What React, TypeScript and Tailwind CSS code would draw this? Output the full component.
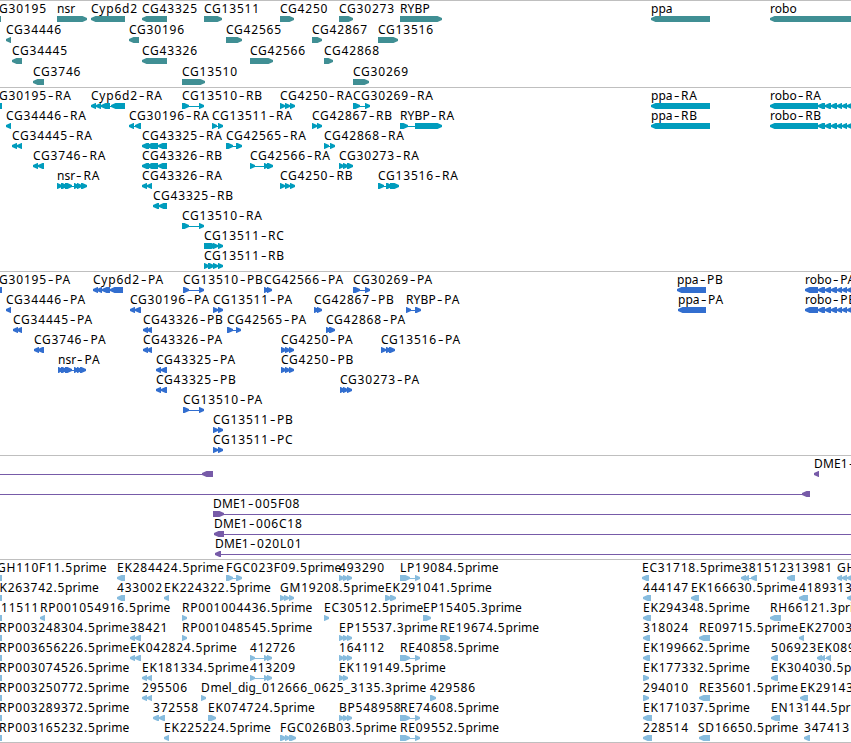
type Dir = "L" | "R"
type Exon = [number, number]

// label, start x, strand, exon blocks (joined by a thin intron line)
type Feature = [string, number, Dir, Exon[]]

interface Track {
  name: string
  color: string
  className: string
  rowClassName: string
  rows: Feature[][]
}

const GLYPH_HEIGHT = 6
const HEAD = 5

const cyp: Exon[] = [[91, 96], [96, 101], [101, 110], [111, 125]]
const robo: Exon[] = [[818, 825], [825, 831], [831, 837], [837, 842], [842, 847], [847, 853]]
const cg4250: Exon[] = [[280, 285], [285, 290], [290, 295]]
const cg43326: Exon[] = [[142, 149], [147, 158], [158, 167]]
const cg4250p: Exon[] = [[281, 286], [285, 290], [289, 294]]
const cg30273: Exon[] = [[339, 344], [343, 348], [347, 352]]
const rybpEst: Exon[] = [[400, 410], [415, 420]]
const cg42566: Exon[] = [[250, 255], [264, 268], [267, 272]]
const edge: Exon[] = [[-5, 2]]

const tracks: Track[] = [
  {
    name: "genes",
    color: "#408f94",
    className: "h-[87px]",
    rowClassName: "h-[21px]",
    rows: [
      [
        ["CG30195", -9, "L", [[-10, 1]]],
        ["nsr", 57, "R", [[57, 87]]],
        ["Cyp6d2", 91, "L", [[91, 125]]],
        ["CG43325", 142, "L", [[142, 167]]],
        ["CG13511", 204, "R", [[204, 222]]],
        ["CG4250", 280, "R", [[280, 294]]],
        ["CG30273", 339, "R", [[339, 353]]],
        ["RYBP", 400, "R", [[400, 442]]],
        ["ppa", 651, "L", [[651, 710]]],
        ["robo", 770, "L", [[770, 860]]],
      ],
      [
        ["CG34446", 6, "L", [[6, 11]]],
        ["CG30196", 129, "L", [[129, 139]]],
        ["CG42565", 226, "R", [[226, 242]]],
        ["CG42867", 312, "R", [[312, 322]]],
        ["CG13516", 378, "R", [[378, 398]]],
      ],
      [
        ["CG34445", 12, "L", [[12, 22]]],
        ["CG43326", 142, "L", [[142, 167]]],
        ["CG42566", 250, "R", [[250, 273]]],
        ["CG42868", 324, "R", [[324, 333]]],
      ],
      [
        ["CG3746", 33, "L", [[33, 44]]],
        ["CG13510", 182, "R", [[182, 205]]],
        ["CG30269", 353, "R", [[353, 369]]],
      ],
    ],
  },
  {
    name: "transcripts",
    color: "#009cbd",
    className: "h-[184px]",
    rowClassName: "h-5",
    rows: [
      [
        ["CG30195-RA", -9, "L", edge],
        ["Cyp6d2-RA", 91, "L", cyp],
        ["CG13510-RB", 182, "R", [[182, 189], [199, 204]]],
        ["CG4250-RA", 280, "R", cg4250],
        ["CG30269-RA", 353, "R", [[353, 360], [365, 370]]],
        ["ppa-RA", 651, "L", [[651, 710]]],
        ["robo-RA", 770, "L", [[770, 818], ...robo]],
      ],
      [
        ["CG34446-RA", 6, "L", [[6, 11]]],
        ["CG30196-RA", 129, "L", [[129, 134], [135, 141]]],
        ["CG13511-RA", 212, "R", [[212, 217], [218, 223]]],
        ["CG42867-RB", 312, "R", [[312, 317], [317, 322]]],
        ["RYBP-RA", 400, "R", [[400, 408], [415, 442]]],
        ["ppa-RB", 651, "L", [[651, 710]]],
        ["robo-RB", 770, "L", [[770, 818], ...robo]],
      ],
      [
        ["CG34445-RA", 12, "L", [[12, 17], [17, 22]]],
        ["CG43325-RA", 142, "L", cg43326],
        ["CG42565-RA", 226, "R", [[226, 233], [236, 242]]],
        ["CG42868-RA", 324, "R", [[324, 329], [330, 335]]],
      ],
      [
        ["CG3746-RA", 33, "L", [[33, 38], [38, 44]]],
        ["CG43326-RB", 142, "L", cg43326],
        ["CG42566-RA", 250, "R", [[250, 255], [264, 269], [267, 273]]],
        ["CG30273-RA", 339, "R", [[339, 344], [343, 348], [347, 353]]],
      ],
      [
        ["nsr-RA", 57, "R", [[57, 62], [61, 67], [65, 72], [74, 79], [77, 82], [81, 87]]],
        ["CG43326-RA", 142, "L", [[142, 147], [147, 152]]],
        ["CG4250-RB", 280, "R", cg4250],
        ["CG13516-RA", 378, "R", [[378, 384], [386, 392], [390, 399]]],
      ],
      [["CG43325-RB", 153, "L", [[153, 159], [159, 167]]]],
      [["CG13510-RA", 182, "R", [[182, 189], [199, 204]]]],
      [["CG13511-RC", 204, "R", [[204, 216], [213, 218], [218, 223]]]],
      [["CG13511-RB", 204, "R", [[204, 209], [208, 214], [213, 218], [218, 223]]]],
    ],
  },
  {
    name: "proteins",
    color: "#326ecf",
    className: "h-[184px]",
    rowClassName: "h-5",
    rows: [
      [
        ["CG30195-PA", -9, "L", edge],
        ["Cyp6d2-PA", 93, "L", [[93, 98], [97, 102], [102, 110], [110, 123]]],
        ["CG13510-PB", 183, "R", [[183, 189], [199, 204]]],
        ["CG42566-PA", 264, "R", [[264, 269], [267, 272]]],
        ["CG30269-PA", 353, "R", [[353, 360], [365, 370]]],
        ["ppa-PB", 677, "L", [[677, 706]]],
        ["robo-PA", 805, "L", [[805, 818], ...robo]],
      ],
      [
        ["CG34446-PA", 6, "L", [[6, 11]]],
        ["CG30196-PA", 130, "L", [[130, 135], [135, 141]]],
        ["CG13511-PA", 213, "R", [[213, 218], [218, 223]]],
        ["CG42867-PB", 314, "R", [[314, 319], [317, 322]]],
        ["RYBP-PA", 406, "R", [[406, 411], [415, 421]]],
        ["ppa-PA", 678, "L", [[678, 706]]],
        ["robo-PB", 805, "L", [[805, 818], ...robo]],
      ],
      [
        ["CG34445-PA", 13, "L", [[13, 18], [17, 22]]],
        ["CG43326-PB", 143, "L", [[143, 148], [147, 152]]],
        ["CG42565-PA", 227, "R", [[227, 233], [236, 241]]],
        ["CG42868-PA", 326, "R", [[326, 331], [329, 335]]],
      ],
      [
        ["CG3746-PA", 34, "L", [[34, 39], [38, 44]]],
        ["CG43326-PA", 143, "L", [[143, 148], [147, 152]]],
        ["CG4250-PA", 281, "R", cg4250p],
        ["CG13516-PA", 381, "R", [[381, 386], [386, 391], [389, 395]]],
      ],
      [
        ["nsr-PA", 58, "R", [[58, 63], [61, 67], [65, 72], [74, 79], [77, 82], [80, 86]]],
        ["CG43325-PA", 156, "L", [[156, 161], [161, 167]]],
        ["CG4250-PB", 281, "R", cg4250p],
      ],
      [
        ["CG43325-PB", 156, "L", [[156, 161], [161, 167]]],
        ["CG30273-PA", 340, "R", [[340, 345], [343, 348], [347, 352]]],
      ],
      [["CG13510-PA", 183, "R", [[183, 189], [199, 204]]]],
      [["CG13511-PB", 213, "R", [[213, 218], [218, 223]]]],
      [["CG13511-PC", 213, "R", [[213, 218], [218, 223]]]],
    ],
  },
  {
    name: "bacs",
    color: "#775ba8",
    className: "h-[104px]",
    rowClassName: "h-5",
    rows: [
      [
        ["", 0, "L", [[-20, -10], [202, 213]]],
        ["DME1-", 814, "L", [[814, 819]]],
      ],
      [["", 0, "L", [[-20, -10], [802, 810]]]],
      [["DME1-005F08", 213, "R", [[213, 224], [870, 880]]]],
      [["DME1-006C18", 214, "L", [[214, 224], [870, 880]]]],
      [["DME1-020L01", 215, "L", [[215, 221], [870, 880]]]],
    ],
  },
  {
    name: "ests",
    color: "#87bcde",
    className: "h-[184px] border-b",
    rowClassName: "h-5",
    rows: [
      [
        ["GH110F11.5prime", -3, "L", edge],
        ["EK284424.5prime", 117, "L", [[117, 125]]],
        ["FGC023F09.5prime", 226, "R", [[226, 233], [236, 242]]],
        ["493290", 339, "R", cg30273],
        ["LP19084.5prime", 400, "R", rybpEst],
        ["EC31718.5prime", 642, "L", [[642, 649]]],
        ["381512", 741, "L", [[741, 746], [745, 749], [751, 757]]],
        ["313981", 787, "L", [[787, 795]]],
        ["GH", 837, "L", [[837, 842], [842, 847], [847, 853]]],
      ],
      [
        ["EK263742.5prime", -8, "L", edge],
        ["433002", 117, "L", [[117, 125]]],
        ["EK224322.5prime", 164, "L", [[164, 169]]],
        ["GM19208.5prime", 280, "R", [[280, 285], [284, 289], [289, 294]]],
        ["EK291041.5prime", 385, "R", [[385, 391], [390, 396]]],
        ["444147", 643, "L", [[643, 651]]],
        ["EK166630.5prime", 691, "L", [[691, 699]]],
        ["418931", 799, "L", [[799, 808]]],
        ["3", 845, "L", [[847, 853]]],
      ],
      [
        ["11511", 1, "L", edge],
        ["RP001054916.5prime", 40, "L", [[40, 45]]],
        ["RP001004436.5prime", 182, "R", [[182, 187]]],
        ["EC30512.5prime", 324, "R", [[324, 329]]],
        ["EP15405.3prime", 423, "R", [[423, 431]]],
        ["EK294348.5prime", 643, "L", [[643, 651]]],
        ["RH66121.3prime", 770, "L", [[770, 781]]],
      ],
      [
        ["RP003248304.5prime", -1, "L", edge],
        ["38421", 130, "L", [[130, 135], [135, 141]]],
        ["RP001048545.5prime", 182, "R", [[182, 187]]],
        ["EP15537.3prime", 339, "R", cg30273],
        ["RE19674.5prime", 440, "R", [[440, 450]]],
        ["318024", 643, "L", [[643, 650]]],
        ["RE09715.5prime", 699, "L", [[699, 710]]],
        ["EK27003", 799, "L", [[799, 804]]],
      ],
      [
        ["RP003656226.5prime", -1, "L", edge],
        ["EK042824.5prime", 130, "L", [[130, 135], [135, 141]]],
        ["412726", 250, "R", cg42566],
        ["164112", 339, "R", cg30273],
        ["RE40858.5prime", 400, "R", rybpEst],
        ["EK199662.5prime", 643, "L", [[643, 650]]],
        ["506923", 771, "L", [[771, 778]]],
        ["EK089", 817, "L", [[817, 822], [821, 825], [826, 831]]],
      ],
      [
        ["RP003074526.5prime", -1, "L", edge],
        ["EK181334.5prime", 142, "L", [[142, 147], [147, 152]]],
        ["413209", 250, "R", cg42566],
        ["EK119149.5prime", 339, "R", [[339, 344], [343, 348]]],
        ["EK177332.5prime", 643, "R", [[643, 649]]],
        ["EK304030.5prime", 771, "L", [[771, 778]]],
      ],
      [
        ["RP003250772.5prime", -1, "L", edge],
        ["295506", 142, "L", [[142, 147], [147, 152]]],
        ["Dmel_dig_012666_0625_3135.3prime", 201, "R", [[201, 206]]],
        ["429586", 430, "R", [[430, 436]]],
        ["294010", 643, "R", [[643, 649]]],
        ["RE35601.5prime", 699, "L", [[699, 710]]],
        ["EK29143", 800, "L", [[800, 808]]],
      ],
      [
        ["RP003289372.5prime", -1, "L", edge],
        ["372558", 153, "L", [[153, 159], [159, 165]]],
        ["EK074724.5prime", 208, "R", [[208, 216]]],
        ["BP548958", 339, "R", cg30273],
        ["RE74608.5prime", 400, "R", rybpEst],
        ["EK171037.5prime", 643, "L", [[643, 652]]],
        ["EN13144.5prime", 771, "L", [[771, 780]]],
      ],
      [
        ["RP003165232.5prime", -1, "L", edge],
        ["EK225224.5prime", 164, "L", [[164, 169]]],
        ["FGC026B03.5prime", 280, "R", [[280, 286], [285, 290], [289, 296]]],
        ["RE09552.5prime", 400, "R", rybpEst],
        ["228514", 643, "L", [[643, 652]]],
        ["SD16650.5prime", 698, "L", [[699, 710]]],
        ["347413", 804, "L", [[804, 810]]],
      ],
    ],
  },
]

// block with an arrow head whose tip is 2px tall
function exonPoints([start, end]: Exon, dir: Dir) {
  const head = Math.min(HEAD, end - start)
  const h = GLYPH_HEIGHT
  if (dir === "R") {
    return `${start},0 ${end - head + 0.5},0 ${end},2 ${end},4 ${end - head + 0.5},${h} ${start},${h}`
  }
  return `${end},0 ${start + head - 0.5},0 ${start},2 ${start},4 ${start + head - 0.5},${h} ${end},${h}`
}

function Label({ text, x }: { text: string; x: number }) {
  return (
    <span className="absolute top-0 whitespace-pre tracking-[0.77px]" style={{ left: x }}>
      {text.split(/(-|prime|nsr|ppa|robo|mel|dig|DME1|RYBP)/).map((part, i) => {
        if (part === "-") {
          return (
            <span key={i} className="inline-block w-[8.3px] origin-center scale-x-140 text-center">
              -
            </span>
          )
        }
        if (part === "DME1" || part === "RYBP") {
          return (
            <span key={i} className="tracking-[0.15px]">
              {part}
            </span>
          )
        }
        if (i % 2 === 1) {
          return (
            <span key={i} className="tracking-[0.05px]">
              {part}
            </span>
          )
        }
        return part
      })}
    </span>
  )
}

function Row({ features, color, className }: { features: Feature[]; color: string; className: string }) {
  return (
    <div className={`relative w-full shrink-0 ${className}`}>
      {features.map(([text, x], i) => (
        <Label key={i} text={text} x={x} />
      ))}
      <svg className="absolute left-0 top-[15px]" width="851" height={GLYPH_HEIGHT} fill={color}>
        {features.map(([, , dir, exons], i) => {
          const start = exons[0][0]
          const end = exons[exons.length - 1][1]
          return (
            <g key={i}>
              {exons.length > 1 && <rect x={start} y={3} width={end - start} height={1} />}
              {exons.map((exon, j) => (
                <polygon key={j} points={exonPoints(exon, dir)} />
              ))}
            </g>
          )
        })}
      </svg>
    </div>
  )
}

export default function App() {
  return (
    <main className="flex h-[743px] w-[851px] flex-col overflow-hidden bg-white font-['Noto_Sans',sans-serif] text-[12px] leading-[15px] text-black">
      {tracks.map((track) => (
        <section
          key={track.name}
          className={`flex shrink-0 flex-col overflow-hidden border-t border-[#bfbfbf] ${track.className}`}
        >
          {track.rows.map((features, i) => (
            <Row key={i} features={features} color={track.color} className={track.rowClassName} />
          ))}
        </section>
      ))}
    </main>
  )
}
